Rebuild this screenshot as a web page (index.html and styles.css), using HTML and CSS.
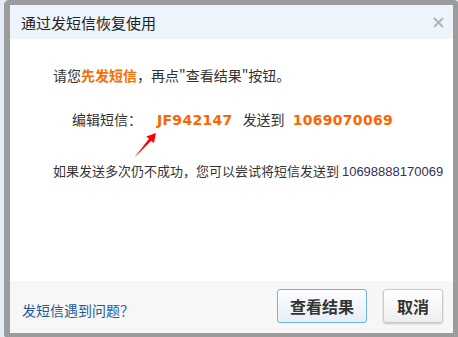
FILE: index.html
```html
<!DOCTYPE html>
<html lang="zh-CN">
<head>
    <meta charset="UTF-8">
    <meta name="viewport" content="width=device-width, initial-scale=1.0">
    <title>通过发短信恢复使用</title>
    <link rel="stylesheet" href="styles.css">
</head>
<body>
    <div class="dialog">
        <div class="dialog-title">
            <span>通过发短信恢复使用</span>
            <a class="dialog-close" href="#" title="关闭">
                <svg width="11" height="11" viewBox="0 0 11 11">
                    <path d="M1 1 L10 10 M10 1 L1 10" stroke="#b4b4b4" stroke-width="2" fill="none"/>
                </svg>
            </a>
        </div>

        <div class="dialog-body">
            <p class="tip">请您<strong class="hl">先发短信</strong>，再点"查看结果"按钮。</p>
            <p class="sms">编辑短信：<b class="code code-text">JF942147</b>发送到<b class="code code-num">1069070069</b></p>
            <p class="fallback">如果发送多次仍不成功，您可以尝试将短信发送到 <span class="num">10698888170069</span></p>

            <!-- 指向短信内容的箭头 -->
            <svg class="pointer" width="40" height="35" viewBox="0 0 40 35">
                <polygon points="14,30 31.2,12.7 33.9,15.05 36,5 26.35,8.45 29,10.8" fill="#f00"/>
            </svg>
        </div>

        <div class="dialog-foot">
            <a class="help" href="#">发短信遇到问题？</a>
            <div class="btns">
                <button class="btn btn-primary">查看结果</button>
                <button class="btn">取消</button>
            </div>
        </div>
    </div>
</body>
</html>
```

FILE: styles.css
```css
* {
    margin: 0;
    padding: 0;
    box-sizing: border-box;
}

body {
    font-family: "Noto Sans CJK SC", "Liberation Sans", sans-serif;
    background: #e4edf7;
    color: #333;
    overflow: hidden;
}

.dialog {
    margin-left: 4px;
    width: 455px;
    height: 339px;
    border: 6px solid #9c9c9c;
    border-top-width: 5px;
    border-radius: 5px;
    background: #fff;
    display: flex;
    flex-direction: column;
}

.dialog-title {
    height: 34px;
    background: #eef4fc;
    display: flex;
    align-items: center;
    justify-content: space-between;
    padding: 0 9px 0 11px;
    font-size: 15px;
    color: #222;
}

.dialog-close {
    display: flex;
}

.dialog-body {
    position: relative;
    height: 242px;
    padding: 26px 0 0 43px;
    font-size: 14px;
    color: #333;
}

.dialog-body p {
    line-height: 20px;
}

.hl {
    color: #ff6a00;
    font-weight: bold;
}

.sms {
    margin-top: 24px;
    padding-left: 19px;
    line-height: 24px;
}

.code {
    font-family: "DejaVu Sans", sans-serif;
    font-size: 14px;
    color: #ff6400;
    letter-spacing: 0.3px;
}

.code-text {
    margin: 0 10px 0 15px;
}

.code-num {
    margin-left: 8px;
}

.fallback {
    margin-top: 31px;
    font-size: 13px;
}

.num {
    font-family: "Liberation Sans", sans-serif;
    color: #33305a;
}

.pointer {
    position: absolute;
    left: 110px;
    top: 89px;
}

.dialog-foot {
    height: 52px;
    background: #f7f7f7;
    display: flex;
    align-items: center;
    justify-content: space-between;
    padding: 0 10px 0 12px;
}

.help {
    color: #1f5c96;
    font-size: 14px;
    text-decoration: none;
    padding-top: 6px;
}

.btns {
    display: flex;
    gap: 16px;
    margin-top: -2px;
}

.btn {
    height: 34px;
    padding: 0 13px;
    font-family: "Noto Sans CJK SC", sans-serif;
    font-size: 16px;
    font-weight: bold;
    color: #333;
    white-space: nowrap;
    border: 1px solid #c9c9c9;
    border-radius: 3px;
    background: linear-gradient(#ffffff, #eeeeee);
    box-shadow: 0 1px 2px rgba(0, 0, 0, 0.2);
    cursor: pointer;
}

.btn-primary {
    width: 90px;
    padding: 0;
    border-color: #6cb4ea;
    background: linear-gradient(#fbfdff, #e7eef6);
    box-shadow: none;
}
```
